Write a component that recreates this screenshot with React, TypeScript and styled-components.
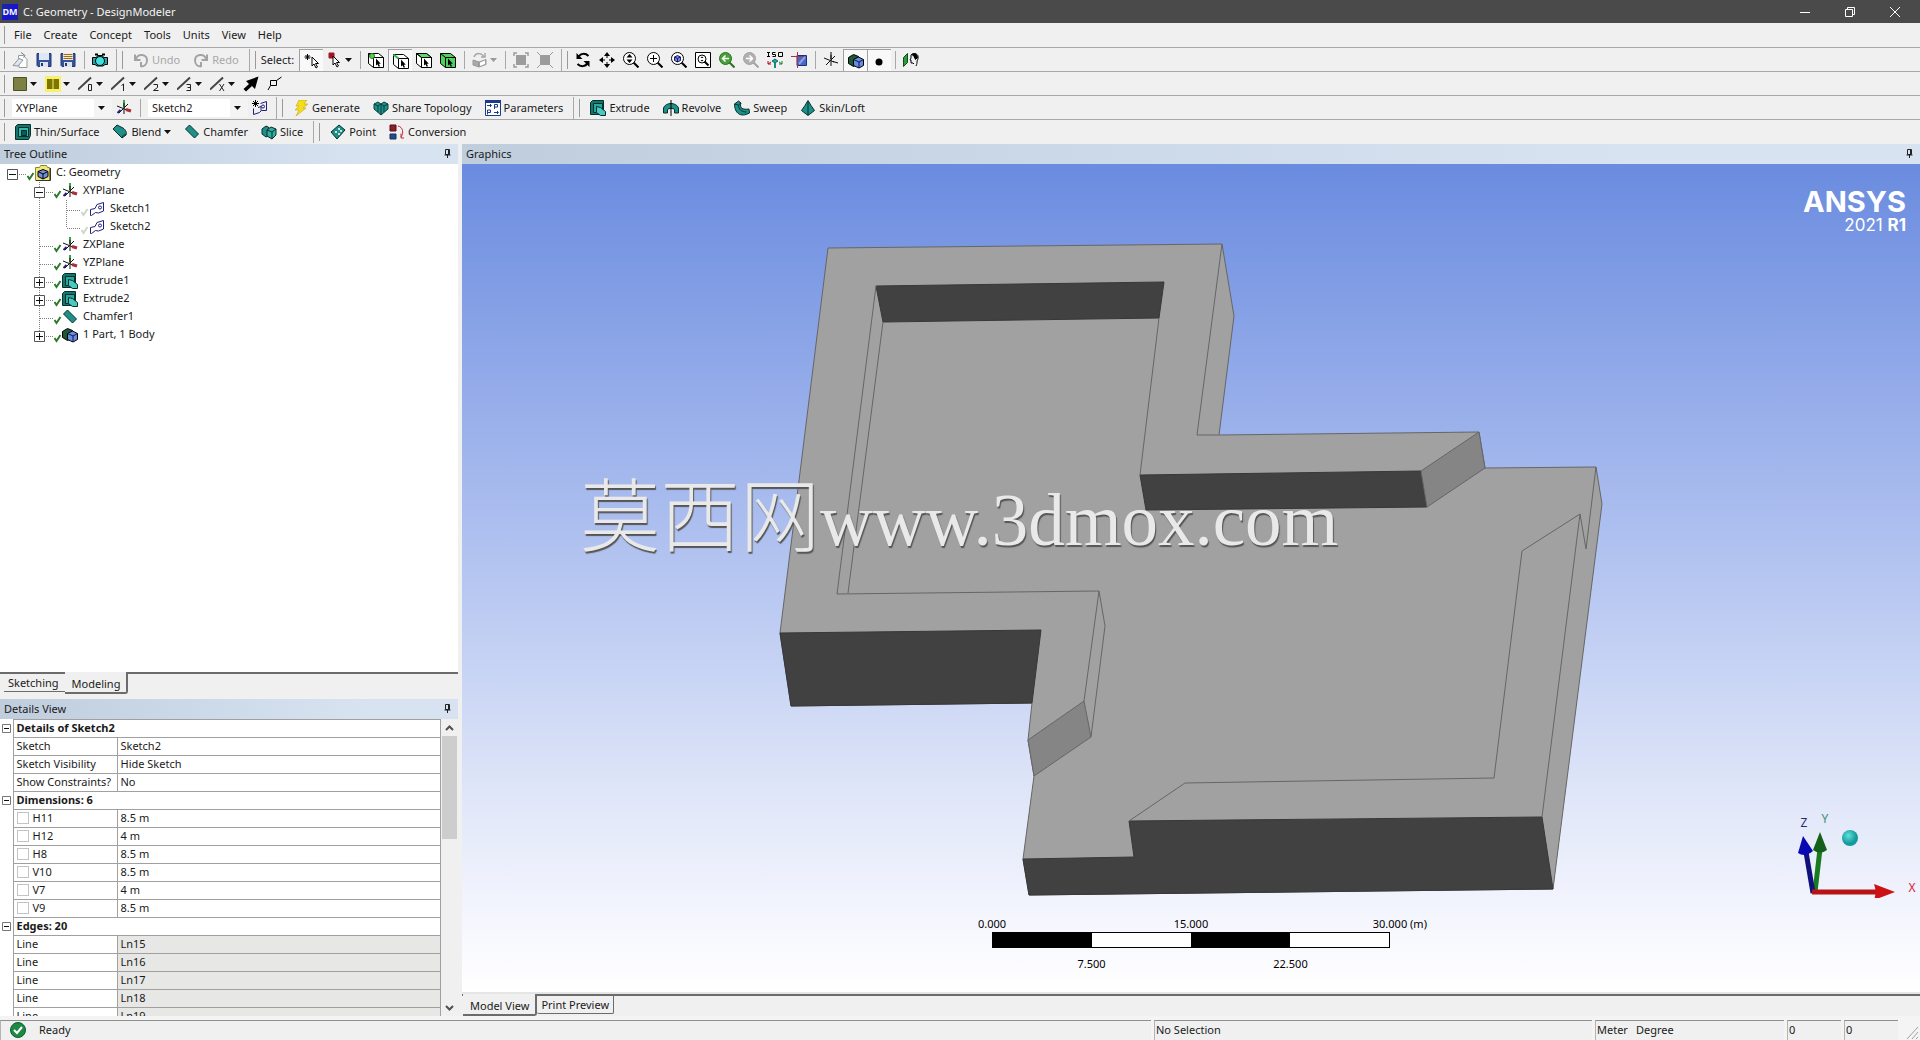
import React from "react";
import styled, { createGlobalStyle, css } from "styled-components";

const UI_FONT = '"Noto Sans", "Open Sans", sans-serif';

const GlobalStyle = createGlobalStyle`
  * { box-sizing: border-box; }
  html, body, #root { height: 100%; }
  body {
    margin: 0;
    background: #f0f0f0;
    color: #1a1a1a;
    font: 11px/16px ${UI_FONT};
    overflow: hidden;
  }
  button, select, input { font: inherit; color: inherit; margin: 0; }
  button { border: 0; padding: 0; background: none; }
`;

/* ---------- frame ---------- */

const Window = styled.div`
  display: flex;
  flex-direction: column;
  height: 100vh;
`;

const TitleBar = styled.header`
  display: flex;
  align-items: center;
  flex: 0 0 23px;
  gap: 5px;
  padding: 0 3px 0 2px;
  background: #4a4a4a;
  color: #f4f4f4;
`;

const AppBadge = styled.span`
  display: flex;
  align-items: center;
  justify-content: center;
  width: 16px;
  height: 16px;
  background: linear-gradient(135deg, #1a2b9c, #1412d8 60%, #1a2a8a);
  font-size: 9px;
  font-weight: 700;
`;

const Title = styled.h1`
  flex: 1;
  margin: 0;
  font-size: 11px;
  font-weight: 400;
`;

const WindowControls = styled.div`
  display: flex;
`;

const WindowButton = styled.button`
  display: flex;
  align-items: center;
  justify-content: center;
  width: 45px;
  height: 23px;
`;

const MenuBar = styled.nav`
  display: flex;
  align-items: center;
  flex: 0 0 25px;
  padding-left: 4px;
  border-bottom: 1px solid #a8a8a8;
`;

const MenuItem = styled.button`
  height: 20px;
  padding: 0 6px;
`;

const ToolRow = styled.div<{ $line?: boolean }>`
  display: flex;
  align-items: stretch;
  flex: 0 0 24px;
  padding-top: 1px;
  border-bottom: 1px solid ${(p) => (p.$line ? "#a8a8a8" : "transparent")};
`;

const ToolGroup = styled.div<{ $last?: boolean }>`
  display: flex;
  align-items: center;
  padding: 0 4px;
  margin-right: 1px;
  border-right: 1px solid ${(p) => (p.$last ? "transparent" : "#a8a8a8")};
`;

const Grip = styled.span`
  flex: none;
  width: 1px;
  height: 18px;
  margin-right: 3px;
  background: #9a9a9a;
`;

const Separator = styled.span`
  flex: none;
  width: 1px;
  height: 18px;
  margin: 0 3px 0 4px;
  background: #a8a8a8;
`;

const IconButton = styled.button<{ $pressed?: boolean; $drop?: boolean }>`
  display: flex;
  align-items: center;
  justify-content: center;
  flex: none;
  gap: 2px;
  width: ${(p) => (p.$drop ? "33px" : "24px")};
  height: 22px;
  ${(p) =>
    p.$pressed &&
    css`
      background: #f9f9f9;
      border-left: 1px solid #a0a0a0;
      border-top: 1px solid #a0a0a0;
    `}
`;

const TextButton = styled.button`
  display: flex;
  align-items: center;
  flex: none;
  gap: 3px;
  height: 22px;
  padding: 0 6px 0 7px;
  white-space: nowrap;
  &:disabled { color: #a8a8a8; }
`;

const SelectLabel = styled.span`
  padding: 0 5px 0 2px;
`;

const Combo = styled.label`
  display: flex;
  position: relative;
  align-items: center;
  width: 100px;
  margin-left: 4px;
  select {
    width: 100%;
    height: 18px;
    padding: 0 4px;
    border: 0;
    background: linear-gradient(to right, #fff 0 82%, #f4f4f4 82%);
    appearance: none;
  }
  svg { position: absolute; right: 7px; pointer-events: none; }
`;

const Work = styled.main`
  display: grid;
  grid-template-columns: 458px minmax(0, 1fr);
  column-gap: 4px;
  flex: 1;
  min-height: 0;
`;

const LeftDock = styled.div`
  display: grid;
  grid-template-rows: 20px minmax(0, 508fr) 27px 20px minmax(0, 297fr);
  min-height: 0;
`;

const RightDock = styled.div`
  display: grid;
  grid-template-rows: 20px minmax(0, 1fr) 22px;
  min-height: 0;
`;

const PaneTitle = styled.h2`
  display: flex;
  align-items: center;
  justify-content: space-between;
  margin: 0;
  padding: 0 6px 0 4px;
  background: linear-gradient(to right, #bfcddd, #d7e3f1 80%);
  font-size: 11px;
  font-weight: 400;
`;

/* ---------- tree ---------- */

const TreeBox = styled.ul`
  margin: 0;
  padding: 0;
  overflow: hidden;
  background: #fff;
  list-style: none;
`;

const TreeRow = styled.li`
  display: flex;
  align-items: center;
  height: 18px;
`;

const NodeLabel = styled.span`
  padding: 0 0 2px 5px;
`;

/* ---------- tabs ---------- */

const Tabs = styled.div<{ $graphics?: boolean }>`
  display: flex;
  align-items: flex-start;
  border-top: 2px solid #6c6c6c;
  padding-left: ${(p) => (p.$graphics ? "1px" : "4px")};
`;

const Tab = styled.button<{ $active?: boolean; $boxed?: boolean }>`
  height: 18px;
  padding: 0 6px 0 4px;
  border-bottom: 1px solid #6c6c6c;
  ${(p) =>
    p.$boxed &&
    css`
      padding-right: 4px;
      border-right: 1px solid #6c6c6c;
      border-radius: 0 0 2px 2px;
    `}
  ${(p) =>
    p.$active &&
    css`
      height: 22px;
      margin-top: -2px;
      padding: 4px 6px 0 7px;
      background: #f0f0f0;
      border-right: 2px solid #6c6c6c;
      border-bottom: 2px solid #6c6c6c;
      border-radius: 0 0 3px 0;
    `}
`;

/* ---------- details ---------- */

const DetailsBody = styled.div`
  display: flex;
  min-height: 0;
  overflow: hidden;
  background: #fff;
`;

const DetailsTable = styled.table`
  flex: 1;
  align-self: flex-start;
  border-collapse: collapse;
  table-layout: fixed;
  td, th {
    height: 18px;
    padding: 0 0 2px 3px;
    border: 1px solid #a0a0a0;
    line-height: 14px;
    font-weight: 400;
    text-align: left;
    white-space: nowrap;
  }
`;

const ToggleCell = styled.td`
  && {
    padding: 0 0 0 2px;
    border-width: 0 1px 0 0;
    line-height: 0;
  }
`;

const SectionCell = styled.th`
  && { font-weight: 700; }
`;

const ValueCell = styled.td<{ $locked?: boolean }>`
  background: ${(p) => (p.$locked ? "#e7e7e5" : "#fff")};
`;

const CheckLabel = styled.label`
  display: flex;
  align-items: center;
  gap: 4px;
  input {
    width: 12px;
    height: 12px;
    border: 1px solid #c4c4c4;
    background: #fff;
    appearance: none;
  }
`;

const ScrollTrack = styled.div`
  display: flex;
  flex-direction: column;
  align-items: center;
  width: 17px;
  background: #f0f0f0;
`;

const ScrollButton = styled.button`
  display: flex;
  align-items: center;
  justify-content: center;
  width: 17px;
  height: 17px;
`;

const ScrollThumb = styled.div`
  flex: 0 0 103px;
  width: 15px;
  margin-bottom: auto;
  background: #cdcdcd;
`;

/* ---------- graphics ---------- */

const Viewport = styled.section`
  position: relative;
  min-height: 0;
  border-bottom: 2px solid #e6e6e6;
  background: linear-gradient(#6a8bdf, #8fa8e8 24%, #b6c6f1 50%, #dfe6f8 76%, #f6f7fe 92%, #fff);
  overflow: hidden;
`;

const Scene = styled.svg`
  display: block;
  width: 100%;
  height: 100%;
`;

const Brand = styled.div`
  position: absolute;
  top: 20px;
  right: 14px;
  color: #fff;
  font-family: Inter, "Open Sans", sans-serif;
  text-align: right;
`;

const BrandName = styled.div`
  font-size: 29px;
  font-weight: 700;
  line-height: 36px;
`;

const BrandRelease = styled.div`
  margin-top: -2px;
  font-size: 17px;
  line-height: 14px;
`;

const Watermark = styled.div`
  position: absolute;
  top: 50%;
  left: 118px;
  display: flex;
  align-items: baseline;
  margin-top: -128px;
  color: #e9e9e9;
  font: 80px/120px "Noto Sans CJK SC", sans-serif;
  font-weight: 300;
  text-shadow: 1px 2px 1px #555;
  white-space: nowrap;
  pointer-events: none;
`;

const WatermarkUrl = styled.span`
  font: 73px/120px "Liberation Serif", serif;
`;

const Ruler = styled.div`
  position: absolute;
  bottom: 20px;
  left: 50%;
  width: 398px;
  margin-left: -199px;
  color: #000;
`;

const RulerLabels = styled.div<{ $below?: boolean }>`
  display: grid;
  grid-template-columns: ${(p) => (p.$below ? "repeat(2, 1fr)" : "repeat(3, 1fr)")};
  margin: ${(p) => (p.$below ? "8px 0 0" : "0 -25%")};
  line-height: 16px;
  text-align: center;
  white-space: nowrap;
`;

const RulerUnit = styled.span`
  position: absolute;
`;

const RulerBar = styled.div`
  display: grid;
  grid-template-columns: repeat(4, 1fr);
  height: 16px;
  border: 1px solid #000;
  background: #fff;
  span:nth-child(odd) { background: #000; }
`;

const Triad = styled.svg`
  position: absolute;
  right: 0;
  bottom: 94px;
`;

/* ---------- status ---------- */

const StatusBar = styled.footer`
  display: grid;
  grid-template-columns: minmax(0, 1fr) 438px 189px 54px 54px 19px;
  column-gap: 3px;
  flex: 0 0 24px;
  padding-top: 4px;
  background: #f4f4f4;
`;

const StatusCell = styled.div`
  display: flex;
  align-items: center;
  gap: 13px;
  padding: 0 0 2px 1px;
  border-top: 1px solid #8f8f8f;
  border-left: 1px solid #b4b4b4;
  background: #f0f0f0;
`;

const ReadyCell = styled(StatusCell)`
  padding-left: 9px;
`;

const UnitsCell = styled(StatusCell)`
  gap: 8px;
`;

/* ---------- icons ---------- */

const TEAL = "#1f9088";

function Icon({ size = 16, children }: { size?: number; children: React.ReactNode }) {
  return (
    <svg width={size} height={size} viewBox="0 0 16 16" fill="none" stroke="#000" strokeWidth="1" aria-hidden="true">
      {children}
    </svg>
  );
}

const Caret = ({ color = "#111" }: { color?: string }) => (
  <svg width="7" height="4" viewBox="0 0 7 4" aria-hidden="true">
    <path d="M0 0h7L3.5 4z" fill={color} />
  </svg>
);

const Pin = () => (
  <svg width="9" height="12" viewBox="0 0 9 12" fill="none" stroke="#222" aria-hidden="true">
    <path d="M2.500 1.500h4v5h-4zM5.500 2v4M1.500 7h6M4.500 7v3" />
  </svg>
);

const NewSketchFile = () => (
  <Icon>
    <path d="M6.500 3.500h5l3.500 4v8H7z" fill="#fff" stroke="#999" />
    <path d="M1 13.500l6-7 4 1.500-5 6z" fill="#e2e5f0" stroke="#8c92a8" />
    <path d="M9 .5l4 3-1.500 2" stroke="#777" />
  </Icon>
);
const Floppy = ({ lines }: { lines?: boolean }) => (
  <Icon>
    <path d="M1 1.500h14v13H2l-1-1z" fill="#33559e" stroke="#23386f" />
    <path d="M3 1h10v7H3z" fill={lines ? "#f8e9cf" : "#dfe6f6"} stroke="none" />
    {lines && <path d="M3.500 2.500h9M3.500 4.500h9M3.500 6.500h9" stroke="#9a6a2a" />}
    <path d="M4 10h8v5H4z" fill="#dfe3ee" stroke="none" />
    <path d="M5 11h2v3H5z" fill="#23386f" stroke="none" />
  </Icon>
);
const CameraIcon = () => (
  <Icon>
    <path d="M.5 5.500h4l1-2h5l1 2h4v7H13l-2 1.500H5L3 12.500H.5z" fill="#27a3a3" />
    <circle cx="8" cy="9" r="4.500" fill="#3fe0e0" />
    <path d="M3 2.500h3M10 2.500h3" strokeWidth="2" />
  </Icon>
);
const UndoIcon = ({ flip }: { flip?: boolean }) => (
  <Icon>
    <g transform={flip ? "matrix(-1 0 0 1 16 0)" : undefined} stroke="#a3a3a3" strokeWidth="2">
      <path d="M3 7c2-6 11-5 11 1.500 0 4-3 6-6 6M8 10v5" />
      <path d="M2 2.500v5.500h5.500" />
    </g>
  </Icon>
);
const Arrow = ({ x = 0, y = 0 }: { x?: number; y?: number }) => (
  <path transform={`translate(${x} ${y})`} d="M0 0v9l2-2 2 4 1.500-1-2-3.500h3z" fill="#fff" />
);
const SelectNew = () => (
  <Icon>
    <path d="M3.500 1v6M.5 4h6M1.500 2l4 4M5.500 2l-4 4" />
    <Arrow x={8} y={4} />
  </Icon>
);
const SelectMode = () => (
  <Icon>
    <path d="M2 1h5v5H2z" fill="#a01722" stroke="#a01722" />
    <Arrow x={6} y={4} />
  </Icon>
);
const FilterCube = ({ mode }: { mode: "point" | "edge" | "face" | "body" }) => (
  <Icon>
    <path d="M.5 1.500h10l5 4v10h-10l-5-4z" fill={mode === "body" ? "#4fd05c" : "#fff"} />
    {mode === "face" && <path d="M.5 1.500h10l5 4h-10z" fill="#5fd56a" />}
    <path d="M.5 1.500l5 4v10M5.500 5.500h10" />
    {mode === "edge" && <path d="M.5 1.500l5 4" stroke="#2fb944" strokeWidth="2" />}
    {mode === "point" && <circle cx="4" cy="4" r="2.500" fill="#63c956" stroke="#2c7a2c" />}
    <path d="M8 6.500v7l1.500-1.200 1.200 2.500 1.300-.6-1.200-2.500h2z" fill="#000" stroke="none" />
  </Icon>
);
const ExtendIcon = () => (
  <Icon>
    <path d="M1 8l6 2v5l-6-2zM7 10l7-2.500v5L7 15z" fill="#a8a8a8" stroke="#999" />
    <path d="M8 10.500l5-2v3.500l-5 2z" fill="#fff" stroke="none" />
    <path d="M2 5c2-5 8-4 10 0M13 1v4H9" stroke="#a8a8a8" strokeWidth="1.500" />
  </Icon>
);
const Expand = ({ inward }: { inward?: boolean }) => (
  <Icon>
    <path d="M3 3h10v10H3z" fill="#9c9c9c" stroke="none" />
    {inward ? (
      <path d="M0 0l4 4M16 0l-4 4M0 16l4-4M16 16l-4-4" stroke="#9c9c9c" />
    ) : (
      <path d="M1 4V1h3M12 1h3v3M15 12v3h-3M4 15H1v-3" stroke="#9c9c9c" strokeWidth="1.500" />
    )}
  </Icon>
);
const RotateIcon = () => (
  <Icon>
    <path d="M3.500 5c2-4 7-4 10-1M12.500 11c-2 4-7 4-10 1" strokeWidth="2" />
    <path d="M1.500 1v6h6zM14.500 15V9h-6z" fill="#000" stroke="none" />
  </Icon>
);
const PanIcon = () => (
  <Icon>
    <path d="M8 3v3M8 10v3M3 8h3M10 8h3" />
    <path d="M8 0l3 4H5zM8 16l3-4H5zM0 8l4-3v6zM16 8l-4-3v6z" fill="#000" stroke="none" />
  </Icon>
);
const Lens = ({ color = "#000", fill = "#fff", children }: { color?: string; fill?: string; children?: React.ReactNode }) => (
  <Icon>
    <path d="M10 10l5.500 5.500" stroke={color} strokeWidth="2" />
    <circle cx="6.500" cy="6.500" r="6" fill={fill} stroke={color} />
    {children}
  </Icon>
);
const ZoomIcon = () => (
  <Lens>
    <path d="M6.500 2l3 3.500h-6zM6.500 11l3-3.500h-6z" fill="#000" stroke="none" />
  </Lens>
);
const BoxZoomIcon = () => (
  <Lens>
    <path d="M6.500 3v7M3 6.500h7" />
  </Lens>
);
const FitIcon = () => (
  <Lens>
    <path d="M3.500 5l3-1.500 3 1.500v3.500l-3 1.500-3-1.500z" fill="#7a84d8" stroke="#1b1b70" />
    <path d="M3.500 5l3 1.500 3-1.500M6.500 6.500V10" stroke="#1b1b70" />
  </Lens>
);
const MagnifierWindow = () => (
  <Icon>
    <path d="M.5.500h15v15H.5z" fill="#fff" />
    <path d="M9.500 9.500l4 4" strokeWidth="2" />
    <circle cx="7" cy="7" r="4" />
    <path d="M7 4.500l1.500 1.500h-3zM7 9.500L8.500 8h-3z" fill="#000" stroke="none" />
  </Icon>
);
const PrevView = () => (
  <Lens color="#2c6f22" fill="#49a039">
    <path d="M10 6.500H4M6.500 3.500l-3 3 3 3" stroke="#fff" strokeWidth="1.500" />
  </Lens>
);
const NextView = () => (
  <Lens color="#a2a2a2" fill="#b0b0b0">
    <path d="M3 6.500h6.500M6.500 3.500l3 3-3 3" stroke="#fff" strokeWidth="1.500" />
  </Lens>
);
const IsoIcon = () => (
  <Icon>
    <path d="M1.500 0v5M0 .5h3M0 4.500h3M8.500.5h-3v2h3v2h-3M11.500 .5h4v4h-4z" />
    <path d="M8 7l3 2-3 2-3-2z" fill="#1fa59b" stroke="#0c6f68" />
    <path d="M8 11v5" stroke="#1a8b84" strokeWidth="2" />
    <path d="M4 10l-3 2M1 9v3h3" stroke="#a01722" />
    <path d="M12 10l3 2M15 9v3h-3" stroke="#1f7f2b" />
  </Icon>
);
const LookAtIcon = () => (
  <Icon>
    <path d="M6 3.500h9.500v10H6z" fill="#4a67c4" stroke="#1c2f7a" />
    <path d="M8 12l6-7" stroke="#8ba2ea" strokeWidth="2" />
    <path d="M6.500 0v16M0 4.500h13" stroke="#a0344a" />
  </Icon>
);
const PlaneGlyph = ({ plain }: { plain?: boolean }) => (
  <Icon>
    <path d="M8 0v7" stroke={plain ? "#000" : "#3c9f45"} strokeWidth={plain ? 1 : 2} />
    <path d="M8 3v11M1 6l10 4M3 13l9-9" stroke="#111" strokeWidth="1" />
    <path d="M10 9.500l5 1.500" stroke={plain ? "#000" : "#a8303a"} strokeWidth={plain ? 1 : 3} />
    {!plain && <path d="M1.500 13l3-3" stroke="#2b1f80" strokeWidth="2" />}
  </Icon>
);
const BodyIcon = () => (
  <Icon>
    <path d="M.5 4.500l5-3 5 2v7l-5 3-5-3z" fill="#1c5a35" />
    <path d="M5.500 6.500l5-2.500 5 2.500v6L11 15l-5.500-2.500z" fill="#6a8ce0" />
    <path d="M5.500 6.500L11 9l4.500-2.500M11 9v6" stroke="#0d1c50" />
  </Icon>
);
const DotIcon = () => (
  <Icon>
    <circle cx="7" cy="9" r="3.500" fill="#000" stroke="none" />
  </Icon>
);
const LookFace = () => (
  <Icon>
    <path d="M.5 5.500l4-4v9l-4 4z" fill="#2e9a3c" stroke="#0d4d18" />
    <path d="M8 3c3-3 8-1 7 3 0 2-1 2-1 4 0 1 0 2-1 4M8 3v3l-1 2h1v3h2l1 1" />
    <path d="M9 2.500c2-1.500 5-1 5.500 3l-2 2-1.500-3z" fill="#000" />
  </Icon>
);
const FaceColor = () => (
  <Icon>
    <path d="M1.500 1.500h13v13h-13z" fill="#7d8042" stroke="#4d5020" />
  </Icon>
);
const EdgeColor = () => (
  <Icon>
    <path d="M0 0h16v16H0z" fill="#f6f06a" stroke="none" />
    <path d="M2 3h5.500v10H2zM8.500 3H14v10H8.500z" fill="#7c7600" stroke="none" />
  </Icon>
);
const LineMode = ({ mark }: { mark: "0" | "1" | "2" | "3" | "x" }) => {
  const marks = {
    "0": "M10.500 8.500h3v6h-3z",
    "1": "M10.500 9.500l2-1.500v7",
    "2": "M9.500 8.500h4v3l-4 3h5",
    "3": "M9.500 8.500h4v6h-4M10.500 11.500h3",
    x: "M9.500 8l4.500 7M14 8l-4.500 7",
  };
  return (
    <Icon>
      <path d="M0 13.500L13 1.500" stroke="#444" strokeWidth="2" />
      <path d={marks[mark]} stroke="#222" />
    </Icon>
  );
};
const BlackArrow = () => (
  <Icon>
    <path d="M15.500 .5L12 13 9 10 3 15.500 .5 13 6 8 3 5z" fill="#000" stroke="none" />
  </Icon>
);
const VertexIcon = () => (
  <Icon>
    <path d="M3.500 4.500h6v5h-6zM9.500 4.500l5-3.500M3.500 9.500L1 14" />
  </Icon>
);
const SketchShape = ({ star }: { star?: boolean }) => (
  <Icon>
    {star ? (
      <path d="M1.500 8.500v6l6-2 2-2h5v-9l-6 2M6 7.500l3-1v4" stroke="#20207c" />
    ) : (
      <path d="M1.500 8.500L6 7.500l2-4 6.500-2v8.500l-5 2-3-.5-4 3h-1z" stroke="#20207c" />
    )}
    <circle cx="11" cy="6.500" r="1.500" stroke="#20207c" />
    {star && <path d="M3.500 0v7M0 3.500h7M1 1l5 5M6 1L1 6" stroke="#000" />}
  </Icon>
);
const Bolt = () => (
  <Icon>
    <path d="M6 0h8l-3 4h4l-5 4h3L3 16l3-6H2l4-4H3z" fill="#f4dd1c" stroke="#b79b00" strokeWidth=".5" />
  </Icon>
);
const ShareTopo = () => (
  <Icon>
    <path d="M1 4l4-2 3 2 3-2 4 2v5l-7 6-7-6z" fill={TEAL} stroke="#08413c" />
    <path d="M1 4l4 2 3-2 3 2 4-2M5 6v6M11 6v6M8 4v11" stroke="#08413c" />
  </Icon>
);
const ParamIcon = () => (
  <Icon>
    <path d="M.5.500h15v15H.5z" fill="#fff" stroke="#1b3c86" />
    <path d="M0 1.500h16" stroke="#1b3c86" strokeWidth="3" />
    <path d="M2 5.500h4M5 4l1.500 1.500L5 7M9.500 9V4.500h3v2.500h-3M2.500 14.500V10h3v2.500h-3M9 12.500h4M12 11l1.500 1.500L12 14" stroke="#1b3c86" />
  </Icon>
);
const ExtrudeIcon = () => (
  <Icon>
    <path d="M.5 2.500l2-2h11v11l-2 3H.5z" fill="#14756e" stroke="#04302c" />
    <path d="M3.500 3.500h9v9h-9z" fill="#2aa79d" stroke="#04302c" />
    <path d="M6.500 6.500l4 1 5 4v4h-5l-4-3z" fill="#4cc9bf" stroke="#04302c" />
  </Icon>
);
const RevolveIcon = () => (
  <Icon>
    <path d="M.5 8c2-6 13-6 15 0v5h-4V9.500c-1-1.500-6-1.500-7 0V13h-4z" fill={TEAL} stroke="#04302c" />
    <path d="M8 0v16" />
  </Icon>
);
const SweepIcon = () => (
  <Icon>
    <path d="M.5 4l4-3 2.500 2c-2 5 2 7 8 6l.5 4c-9 5-15 0-15-9z" fill={TEAL} stroke="#04302c" />
    <path d="M.5 4l4 1 2.500-2M4.500 5c0 4 3 7 8 7" stroke="#04302c" />
  </Icon>
);
const LoftIcon = () => (
  <Icon>
    <path d="M8 .5l3 5 3.500 5-6.500 5-6.500-5 3.500-5z" fill={TEAL} stroke="#04302c" />
    <path d="M8 1v14" stroke="#04302c" />
  </Icon>
);
const ThinIcon = () => (
  <Icon>
    <path d="M.5 2.500l2-2h13v11l-2 4H.5z" fill="#14756e" stroke="#04302c" />
    <path d="M3.500 3.500h10v9h-10z" fill="#3bb5ab" stroke="#04302c" />
    <path d="M6.500 6.500h5v5h-5z" fill="#0b5954" stroke="#04302c" />
  </Icon>
);
const BlendIcon = () => (
  <Icon>
    <path d="M1 5l4-4 6 3c3 2 4 5 3 7l-4 3z" fill={TEAL} stroke="#04302c" />
    <path d="M10 14c1-3 2-4 4-3" stroke="#04302c" />
  </Icon>
);
const ChamferIcon = () => (
  <Icon>
    <path d="M1.500 5l4-4 9 9-4 4z" fill={TEAL} stroke="#04302c" />
  </Icon>
);
const SliceIcon = () => (
  <Icon>
    <path d="M1 5l4-3 3 1.500v8L5 13l-4-3z" fill={TEAL} stroke="#04302c" />
    <path d="M6 6l4-3 5 2v6l-4 4-5-3z" fill="#35aca2" stroke="#04302c" />
    <path d="M6 6l5 2 4-3M11 8v7" stroke="#04302c" />
  </Icon>
);
const PointIcon = () => (
  <Icon>
    <path d="M1 8l8-7 6 5-8 9z" fill={TEAL} stroke="#04302c" />
    <path d="M5 8h2M8 5h2M8 10h2M10 7h2" stroke="#fff" strokeWidth="1.500" />
  </Icon>
);
const ConversionIcon = () => (
  <Icon>
    <path d="M1 1h6v6H1z" fill="#8c1d2d" stroke="#5a0d1a" />
    <path d="M1 10h6v5H1z" fill="#234a86" stroke="#12305e" />
    <path d="M9 2c5 1 6 7 3 11M12 9.500V14h3" stroke="#c2283a" />
  </Icon>
);
const GeometryIcon = () => (
  <Icon>
    <path d="M.5 2.500h4l1-2h6l1 2h2v13H.5z" fill="#f1e87c" stroke="#8c8430" />
    <path d="M1 15.500h14.500V3" stroke="#333" />
    <path d="M3 6.500l5-2 5 2v5L8 14l-5-2.500z" fill="#7290d8" />
    <path d="M3 6.500L8 9l5-2.500M8 9v5" />
  </Icon>
);
const Check = ({ faint }: { faint?: boolean }) => (
  <svg width="8" height="18" viewBox="0 0 8 18" fill="none" aria-hidden="true">
    <path d="M0.500 12l2 3 4-6" stroke={faint ? "#cfd6c8" : "#2c7a2c"} strokeWidth="2" />
  </svg>
);
const Ready = () => (
  <svg width="16" height="16" viewBox="0 0 16 16" aria-hidden="true">
    <circle cx="8" cy="8" r="7.500" fill="#1c8a45" stroke="#0e5a2a" />
    <path d="M4 8l3 3 5-6" fill="none" stroke="#fff" strokeWidth="2" />
  </svg>
);

/* ---------- tree guides ---------- */

type GuideKind = "root" | "tee" | "end" | "line" | "blank";

function Guide({ kind, toggle }: { kind: GuideKind; toggle?: "+" | "-" }) {
  const dotted = { stroke: "#808080", strokeDasharray: "1 1" };
  return (
    <svg width="27" height="18" viewBox="0 0 27 18" fill="none" aria-hidden="true">
      {(kind === "tee" || kind === "line") && <path d="M12.500 0v18" {...dotted} />}
      {kind === "end" && <path d="M12.500 0v10" {...dotted} />}
      {kind !== "line" && kind !== "blank" && <path d="M13 10.500h14" {...dotted} />}
      {toggle && <path d="M7.500 5.500h10v10h-10z" fill="#fff" stroke="#555" />}
      {toggle && <path d={toggle === "+" ? "M9 10.500h7M12.500 7v7" : "M9 10.500h7"} stroke="#111" />}
    </svg>
  );
}

type Node = {
  label: string;
  icon: React.ReactNode;
  guides: GuideKind[];
  toggle?: "+" | "-";
  faint?: boolean;
};

const nodes: Node[] = [
  { label: "C: Geometry", icon: <GeometryIcon />, guides: ["root"], toggle: "-" },
  { label: "XYPlane", icon: <PlaneGlyph />, guides: ["blank", "tee"], toggle: "-" },
  { label: "Sketch1", icon: <SketchShape />, guides: ["blank", "line", "tee"], faint: true },
  { label: "Sketch2", icon: <SketchShape />, guides: ["blank", "line", "end"], faint: true },
  { label: "ZXPlane", icon: <PlaneGlyph />, guides: ["blank", "tee"] },
  { label: "YZPlane", icon: <PlaneGlyph />, guides: ["blank", "tee"] },
  { label: "Extrude1", icon: <ExtrudeIcon />, guides: ["blank", "tee"], toggle: "+" },
  { label: "Extrude2", icon: <ExtrudeIcon />, guides: ["blank", "tee"], toggle: "+" },
  { label: "Chamfer1", icon: <ChamferIcon />, guides: ["blank", "tee"] },
  { label: "1 Part, 1 Body", icon: <BodyIcon />, guides: ["blank", "end"], toggle: "+" },
];

/* ---------- details data ---------- */

type Field = { name: string; value: string; check?: boolean; locked?: boolean };

const line = (n: number): Field => ({ name: "Line", value: `Ln${n}`, locked: true });
const dim = (name: string, value: string): Field => ({ name, value, check: true });

const sections: { title: string; fields: Field[] }[] = [
  {
    title: "Details of Sketch2",
    fields: [
      { name: "Sketch", value: "Sketch2" },
      { name: "Sketch Visibility", value: "Hide Sketch" },
      { name: "Show Constraints?", value: "No" },
    ],
  },
  {
    title: "Dimensions: 6",
    fields: [dim("H11", "8.5 m"), dim("H12", "4 m"), dim("H8", "8.5 m"), dim("V10", "8.5 m"), dim("V7", "4 m"), dim("V9", "8.5 m")],
  },
  { title: "Edges: 20", fields: [15, 16, 17, 18, 19].map(line) },
];

const ToggleCol = styled.col`
  width: 13px;
`;

const NameCol = styled.col`
  width: 104px;
`;

const Collapse = () => (
  <svg width="9" height="9" viewBox="0 0 9 9" fill="#fff" stroke="#777" aria-hidden="true">
    <path d="M.5.500h8v8h-8z" />
    <path d="M2 4.500h5" stroke="#111" />
  </svg>
);

function Details() {
  return (
    <DetailsBody>
      <DetailsTable>
        <colgroup>
          <ToggleCol />
          <NameCol />
          <col />
        </colgroup>
        <tbody>
          {sections.map((s) => (
            <React.Fragment key={s.title}>
              <tr>
                <ToggleCell>
                  <Collapse />
                </ToggleCell>
                <SectionCell colSpan={2}>{s.title}</SectionCell>
              </tr>
              {s.fields.map((f) => (
                <tr key={f.name + f.value}>
                  <ToggleCell />
                  <td>
                    {f.check ? (
                      <CheckLabel>
                        <input type="checkbox" />
                        {f.name}
                      </CheckLabel>
                    ) : (
                      f.name
                    )}
                  </td>
                  <ValueCell $locked={f.locked}>{f.value}</ValueCell>
                </tr>
              ))}
            </React.Fragment>
          ))}
        </tbody>
      </DetailsTable>
      <ScrollTrack>
        <ScrollButton aria-label="Scroll up">
          <svg width="9" height="6" viewBox="0 0 9 6" fill="none" stroke="#505050" strokeWidth="2">
            <path d="M1 5l3.500-3.500L8 5" />
          </svg>
        </ScrollButton>
        <ScrollThumb />
        <ScrollButton aria-label="Scroll down">
          <svg width="9" height="6" viewBox="0 0 9 6" fill="none" stroke="#505050" strokeWidth="2">
            <path d="M1 1l3.500 3.500L8 1" />
          </svg>
        </ScrollButton>
      </ScrollTrack>
    </DetailsBody>
  );
}

/* ---------- solid model ---------- */

function Model() {
  return (
    <Scene viewBox="462 164 1458 828" preserveAspectRatio="xMidYMid meet" role="img" aria-label="Solid model">
      <g stroke="#666" strokeWidth="1" strokeLinejoin="round">
        <path
          d="M828 248L1222 244 1234 316 1219 435 1479 432 1485 468 1596 467 1602 504 1553 889 1029 895 1023 859 1034 776 1028 740 1032 703 791 706 780 633z"
          fill="#a1a1a1"
        />
        <g fill="#414141" stroke="#383838">
          <path d="M876 286L1164 282 1159 318 883 322z" />
          <path d="M1140 475L1421 471 1427 507 1146 510z" />
          <path d="M780 633L1041 630 1032 703 791 706z" />
          <path d="M1023 859L1134 857 1129 821 1542 817 1553 889 1029 895z" />
        </g>
        <g fill="#858585">
          <path d="M1421 471L1479 432 1485 468 1427 507z" />
          <path d="M1028 740L1084 701 1091 737 1034 776z" />
        </g>
        <g fill="none">
          <path d="M1222 244L1197 435H1219" />
          <path d="M876 286L837 594 1099 591 1105 626 1091 737M883 322L848 593" />
          <path d="M1099 591L1084 701" />
          <path d="M1159 318L1140 475" />
          <path d="M1596 467L1586 549 1580 514 1522 551 1494 778 1185 783 1129 821" />
          <path d="M1580 514L1542 817" />
        </g>
      </g>
    </Scene>
  );
}

function AxisTriad() {
  return (
    <Triad width="130" height="90" viewBox="1790 808 130 90" aria-label="Axis triad">
      <defs>
        <radialGradient id="ball" cx="40%" cy="35%">
          <stop offset="0" stopColor="#5fe0dc" />
          <stop offset="1" stopColor="#149a9a" />
        </radialGradient>
      </defs>
      <path d="M1815 892L1820 849" stroke="#1a7a1f" strokeWidth="5" />
      <path d="M1820 832L1827 850Q1820 855 1813 850z" fill="#156018" />
      <path d="M1813 893L1806 852" stroke="#10107c" strokeWidth="5" />
      <path d="M1803 836L1813 851Q1805 858 1798 853z" fill="#0909b4" />
      <path d="M1812 892H1876" stroke="#b81414" strokeWidth="5" />
      <path d="M1874 884L1895 892 1874 900Q1877 892 1874 884z" fill="#cc1212" />
      <circle cx="1850" cy="838" r="8" fill="url(#ball)" />
      <g fontSize="12" textAnchor="middle">
        <text x="1804" y="827" fill="#28286a">Z</text>
        <text x="1825" y="823" fill="#3e8f6a">Y</text>
        <text x="1912" y="892" fill="#d8203c">X</text>
      </g>
    </Triad>
  );
}

type Tool = { name: string; icon: React.ReactNode; drop?: boolean; pressed?: boolean; disabled?: boolean };

const Tools = ({ items }: { items: Tool[] }) => (
  <>
    {items.map((t) => (
      <IconButton key={t.name} aria-label={t.name} $drop={t.drop} $pressed={t.pressed} disabled={t.disabled}>
        {t.icon}
        {t.drop && <Caret color={t.disabled ? "#999" : "#111"} />}
      </IconButton>
    ))}
  </>
);

const Labeled = ({ icon, children, drop, disabled }: { icon: React.ReactNode; children: string; drop?: boolean; disabled?: boolean }) => (
  <TextButton disabled={disabled}>
    {icon}
    {children}
    {drop && <Caret />}
  </TextButton>
);

export default function App() {
  return (
    <Window>
      <GlobalStyle />
      <TitleBar>
        <AppBadge>DM</AppBadge>
        <Title>C: Geometry - DesignModeler</Title>
        <WindowControls>
          <WindowButton aria-label="Minimize">
            <svg width="10" height="10" stroke="#fff"><path d="M0 5.500h10" /></svg>
          </WindowButton>
          <WindowButton aria-label="Restore">
            <svg width="10" height="10" stroke="#fff" fill="none"><path d="M.5 2.500h7v7h-7zM2.500 2.500v-2h7v7h-2" /></svg>
          </WindowButton>
          <WindowButton aria-label="Close">
            <svg width="10" height="10" stroke="#fff"><path d="M0 0l10 10M10 0L0 10" /></svg>
          </WindowButton>
        </WindowControls>
      </TitleBar>

      <MenuBar>
        <Grip />
        {["File", "Create", "Concept", "Tools", "Units", "View", "Help"].map((m) => (
          <MenuItem key={m}>{m}</MenuItem>
        ))}
      </MenuBar>

      <ToolRow $line>
        <ToolGroup>
          <Grip />
          <Tools items={[{ name: "New", icon: <NewSketchFile /> }, { name: "Save", icon: <Floppy /> }, { name: "Export", icon: <Floppy lines /> }]} />
          <Separator />
          <Tools items={[{ name: "Capture", icon: <CameraIcon /> }]} />
        </ToolGroup>
        <ToolGroup>
          <Grip />
          <Labeled icon={<UndoIcon />} disabled>Undo</Labeled>
          <Labeled icon={<UndoIcon flip />} disabled>Redo</Labeled>
        </ToolGroup>
        <ToolGroup>
          <Grip />
          <SelectLabel>Select:</SelectLabel>
          <Tools
            items={[
              { name: "New selection", icon: <SelectNew />, pressed: true },
              { name: "Select mode", icon: <SelectMode />, drop: true },
            ]}
          />
          <Separator />
          <Tools
            items={[
              { name: "Points", icon: <FilterCube mode="point" /> },
              { name: "Edges", icon: <FilterCube mode="edge" />, pressed: true },
              { name: "Faces", icon: <FilterCube mode="face" /> },
              { name: "Bodies", icon: <FilterCube mode="body" /> },
            ]}
          />
          <Separator />
          <Tools items={[{ name: "Extend selection", icon: <ExtendIcon />, drop: true, disabled: true }]} />
          <Separator />
          <Tools
            items={[
              { name: "Expand", icon: <Expand />, disabled: true },
              { name: "Shrink", icon: <Expand inward />, disabled: true },
            ]}
          />
        </ToolGroup>
        <ToolGroup $last>
          <Grip />
          <Tools
            items={[
              { name: "Rotate", icon: <RotateIcon /> },
              { name: "Pan", icon: <PanIcon /> },
              { name: "Zoom", icon: <ZoomIcon /> },
              { name: "Box zoom", icon: <BoxZoomIcon /> },
              { name: "Zoom to fit", icon: <FitIcon /> },
              { name: "Magnifier", icon: <MagnifierWindow /> },
              { name: "Previous view", icon: <PrevView /> },
              { name: "Next view", icon: <NextView />, disabled: true },
              { name: "Isometric", icon: <IsoIcon /> },
              { name: "Look at", icon: <LookAtIcon /> },
            ]}
          />
          <Separator />
          <Tools
            items={[
              { name: "Display plane", icon: <PlaneGlyph plain /> },
              { name: "Display model", icon: <BodyIcon />, pressed: true },
              { name: "Display points", icon: <DotIcon />, pressed: true },
            ]}
          />
          <Separator />
          <Tools items={[{ name: "Look at face", icon: <LookFace /> }]} />
        </ToolGroup>
      </ToolRow>

      <ToolRow $line>
        <ToolGroup $last>
          <Grip />
          <Tools
            items={[
              { name: "Face colour", icon: <FaceColor />, drop: true },
              { name: "Edge colour", icon: <EdgeColor />, drop: true },
              { name: "Edges 0", icon: <LineMode mark="0" />, drop: true },
              { name: "Edges 1", icon: <LineMode mark="1" />, drop: true },
              { name: "Edges 2", icon: <LineMode mark="2" />, drop: true },
              { name: "Edges 3", icon: <LineMode mark="3" />, drop: true },
              { name: "Edges X", icon: <LineMode mark="x" />, drop: true },
              { name: "Edge direction", icon: <BlackArrow /> },
              { name: "Vertices", icon: <VertexIcon /> },
            ]}
          />
        </ToolGroup>
      </ToolRow>

      <ToolRow $line>
        <ToolGroup>
          <Grip />
          <Combo>
            <select aria-label="Active plane">
              <option>XYPlane</option>
            </select>
            <Caret />
          </Combo>
          <Tools items={[{ name: "New plane", icon: <PlaneGlyph /> }]} />
          <Separator />
          <Combo>
            <select aria-label="Active sketch">
              <option>Sketch2</option>
            </select>
            <Caret />
          </Combo>
          <Tools items={[{ name: "New sketch", icon: <SketchShape star /> }]} />
        </ToolGroup>
        <ToolGroup>
          <Grip />
          <Labeled icon={<Bolt />}>Generate</Labeled>
          <Labeled icon={<ShareTopo />}>Share Topology</Labeled>
          <Labeled icon={<ParamIcon />}>Parameters</Labeled>
        </ToolGroup>
        <ToolGroup $last>
          <Grip />
          <Labeled icon={<ExtrudeIcon />}>Extrude</Labeled>
          <Labeled icon={<RevolveIcon />}>Revolve</Labeled>
          <Labeled icon={<SweepIcon />}>Sweep</Labeled>
          <Labeled icon={<LoftIcon />}>Skin/Loft</Labeled>
        </ToolGroup>
      </ToolRow>

      <ToolRow>
        <ToolGroup>
          <Grip />
          <Labeled icon={<ThinIcon />}>Thin/Surface</Labeled>
          <Labeled icon={<BlendIcon />} drop>Blend</Labeled>
          <Labeled icon={<ChamferIcon />}>Chamfer</Labeled>
          <Labeled icon={<SliceIcon />}>Slice</Labeled>
        </ToolGroup>
        <ToolGroup $last>
          <Grip />
          <Labeled icon={<PointIcon />}>Point</Labeled>
          <Labeled icon={<ConversionIcon />}>Conversion</Labeled>
        </ToolGroup>
      </ToolRow>

      <Work>
        <LeftDock>
          <PaneTitle>
            Tree Outline
            <Pin />
          </PaneTitle>
          <TreeBox>
            {nodes.map((n) => (
              <TreeRow key={n.label}>
                {n.guides.map((g, i) => (
                  <Guide key={i} kind={g} toggle={i === n.guides.length - 1 ? n.toggle : undefined} />
                ))}
                <Check faint={n.faint} />
                {n.icon}
                <NodeLabel>{n.label}</NodeLabel>
              </TreeRow>
            ))}
          </TreeBox>
          <Tabs>
            <Tab>Sketching</Tab>
            <Tab $active>Modeling</Tab>
          </Tabs>
          <PaneTitle>
            Details View
            <Pin />
          </PaneTitle>
          <Details />
        </LeftDock>

        <RightDock>
          <PaneTitle>
            Graphics
            <Pin />
          </PaneTitle>
          <Viewport>
            <Model />
            <Brand>
              <BrandName>ANSYS</BrandName>
              <BrandRelease>
                2021 <b>R1</b>
              </BrandRelease>
            </Brand>
            <Watermark>
              莫西网<WatermarkUrl>www.3dmox.com</WatermarkUrl>
            </Watermark>
            <Ruler>
              <RulerLabels>
                <span>0.000</span>
                <span>15.000</span>
                <span>
                  30.000<RulerUnit>&nbsp;(m)</RulerUnit>
                </span>
              </RulerLabels>
              <RulerBar>
                <span />
                <span />
                <span />
                <span />
              </RulerBar>
              <RulerLabels $below>
                <span>7.500</span>
                <span>22.500</span>
              </RulerLabels>
            </Ruler>
            <AxisTriad />
          </Viewport>
          <Tabs $graphics>
            <Tab $active>Model View</Tab>
            <Tab $boxed>Print Preview</Tab>
          </Tabs>
        </RightDock>
      </Work>

      <StatusBar>
        <ReadyCell>
          <Ready />
          Ready
        </ReadyCell>
        <StatusCell>No Selection</StatusCell>
        <UnitsCell>
          <span>Meter</span>
          <span>Degree</span>
        </UnitsCell>
        <StatusCell>0</StatusCell>
        <StatusCell>0</StatusCell>
        <svg width="18" height="20" viewBox="0 0 18 20" fill="none" stroke="#a0a0a0" aria-hidden="true">
          <path d="M6 19L17 7M11 19l6-7M15 19l2-2" />
        </svg>
      </StatusBar>
    </Window>
  );
}
